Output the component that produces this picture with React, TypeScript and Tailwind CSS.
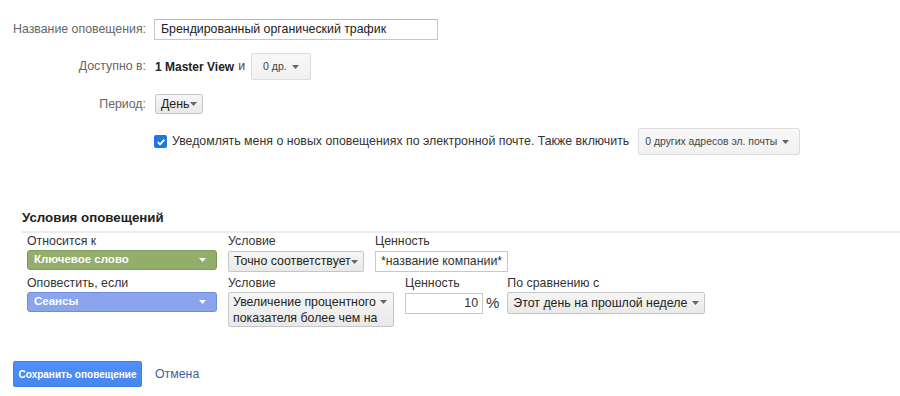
import React from "react";

const Caret = ({ color = "#666" }: { color?: string }) => (
  <svg width="7" height="4" viewBox="0 0 7 4" className="shrink-0">
    <polygon points="0,0 7,0 3.5,4" fill={color} />
  </svg>
);

const grey = "border border-[#c6c6c6] rounded-[2px] bg-gradient-to-b from-[#f6f6f6] to-[#e9e9e9]";
const light = "border border-[#dcdcdc] rounded-[2px] bg-gradient-to-b from-[#f8f8f8] to-[#f1f1f1]";

export default function App() {
  return (
    <div className="w-[900px] h-[396px] bg-white text-[12.35px] text-[#222] whitespace-nowrap font-['Liberation_Sans',Arial,sans-serif] overflow-hidden">
      <div className="pt-[19px]">
        <div className="flex items-center h-[21px]">
          <div className="w-[146px] text-right text-[#666]">Название оповещения:</div>
          <div className="ml-[8px] w-[284px] h-[21px] border border-[#c8c8c8] border-t-[#b8b8b8] px-[6px] flex items-center text-[#222]">
            Брендированный органический трафик
          </div>
        </div>

        <div className="flex items-center h-[27px] mt-[13px]">
          <div className="w-[146px] text-right text-[#666] self-start pt-[4px]">Доступно в:</div>
          <div className="ml-[9px] flex items-center">
            <span className="font-bold text-[12px]">1 Master View</span>
            <span className="ml-[4px] text-[#444]">и</span>
            <div className={`ml-[6px] w-[60px] h-[27px] ${light} flex items-center justify-between pl-[11px] pr-[11px] text-[10.5px] text-[#444]`}>
              <span>0 др.</span>
              <Caret />
            </div>
          </div>
        </div>

        <div className="flex items-center h-[20px] mt-[14px]">
          <div className="w-[146px] text-right text-[#666]">Период:</div>
          <div className={`ml-[9px] w-[48px] h-[20px] ${grey} flex items-center justify-between pl-[5px] pr-[5px] text-[#222]`}>
            <span>День</span>
            <Caret />
          </div>
        </div>

        <div className="flex items-center h-[27px] mt-[14px] pl-[154px]">
          <span className="w-[13px] h-[13px] rounded-[2px] bg-[#1f77e6] flex items-center justify-center">
            <svg width="10" height="10" viewBox="0 0 10 10">
              <path d="M1.8 5.2 L4 7.4 L8.4 2.6" stroke="#fff" strokeWidth="1.8" fill="none" />
            </svg>
          </span>
          <span className="ml-[5px] text-[#333]">Уведомлять меня о новых оповещениях по электронной почте. Также включить</span>
          <div className={`ml-[9px] w-[162px] h-[27px] ${light} flex items-center justify-between pl-[6px] pr-[10px] text-[10.4px] text-[#444]`}>
            <span>0 других адресов эл. почты</span>
            <Caret />
          </div>
        </div>
      </div>

      <div className="mt-[55px] pl-[22px]">
        <div className="font-bold text-[13.3px] text-[#222] leading-[16px]">Условия оповещений</div>
        <div className="mt-[5px] h-[2px] bg-[#ececec]" />

        <div className="pl-[5px] flex items-start mt-[1px]">
          <div className="w-[190px]">
            <div className="text-[#333] leading-[14px]">Относится к</div>
            <div className="mt-[2px] h-[20px] rounded-[3px] bg-[#93ad6a] border border-[#7f9b5a] flex items-center justify-between pl-[6px] pr-[10px]">
              <span className="text-white font-bold text-[11.5px]">Ключевое слово</span>
              <Caret color="#fff" />
            </div>
          </div>
          <div className="ml-[11px] w-[136px]">
            <div className="text-[#333] leading-[14px]">Условие</div>
            <div className={`mt-[3px] h-[21px] ${grey} flex items-center justify-between pl-[5px] pr-[5px]`}>
              <span>Точно соответствует</span>
              <Caret />
            </div>
          </div>
          <div className="ml-[11px] w-[133px]">
            <div className="text-[#333] leading-[14px]">Ценность</div>
            <div className="mt-[3px] h-[21px] border border-[#c8c8c8] px-[5px] flex items-center text-[#333]">*название компании*</div>
          </div>
        </div>

        <div className="pl-[5px] flex items-start mt-[4px]">
          <div className="w-[190px]">
            <div className="text-[#333] leading-[14px]">Оповестить, если</div>
            <div className="mt-[2px] h-[20px] rounded-[3px] bg-[#8aa5ee] border border-[#6f8ddb] flex items-center justify-between pl-[6px] pr-[10px]">
              <span className="text-white font-bold text-[11.5px]">Сеансы</span>
              <Caret color="#fff" />
            </div>
          </div>
          <div className="ml-[11px] w-[166px]">
            <div className="text-[#333] leading-[14px]">Условие</div>
            <div className={`mt-[2px] h-[35px] ${grey} flex items-start justify-between pl-[4px] pr-[6px] pt-[1px] leading-[16px]`}>
              <span>
                Увеличение процентного
                <br />
                показателя более чем на
              </span>
              <span className="pt-[6px]">
                <Caret />
              </span>
            </div>
          </div>
          <div className="ml-[11px]">
            <div className="text-[#333] leading-[14px]">Ценность</div>
            <div className="mt-[2px] flex items-center">
              <div className="w-[78px] h-[21px] border border-[#c8c8c8] px-[4px] flex items-center justify-end text-[#333]">10</div>
              <span className="ml-[3px] text-[15px] text-[#333]">%</span>
            </div>
          </div>
          <div className="ml-[8px]">
            <div className="text-[#333] leading-[14px]">По сравнению с</div>
            <div className={`mt-[2px] w-[198px] h-[22px] ${grey} flex items-center justify-between pl-[5px] pr-[5px]`}>
              <span>Этот день на прошлой неделе</span>
              <Caret />
            </div>
          </div>
        </div>
      </div>

      <div className="mt-[34px] pl-[13px] flex items-center">
        <div className="w-[129px] h-[26px] rounded-[2px] bg-gradient-to-b from-[#4d90fe] to-[#4787ed] border border-[#3f7fe6] flex items-center justify-center text-white font-bold text-[10px]">
          Сохранить оповещение
        </div>
        <span className="ml-[13px] text-[#3d5f9e]">Отмена</span>
      </div>
    </div>
  );
}
